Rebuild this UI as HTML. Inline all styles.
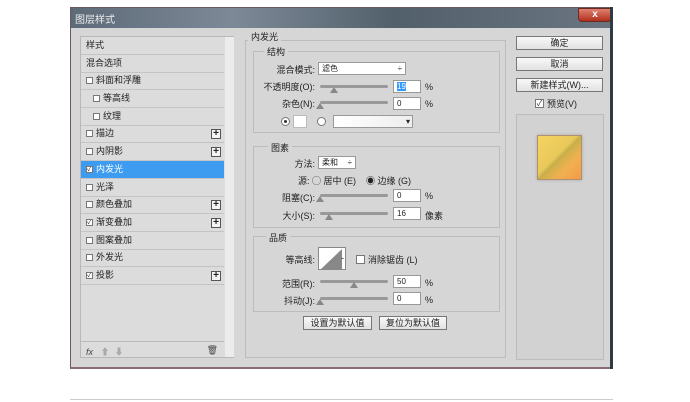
<!DOCTYPE html><html><head><meta charset="utf-8"><style>
*{box-sizing:border-box;margin:0;padding:0}
body{width:690px;height:402px;background:#fff;position:relative;overflow:hidden;font-family:"Liberation Sans","Noto Sans CJK SC",sans-serif;font-size:9px;color:#222}
.a{position:absolute}
.dlg{left:70px;top:7px;width:543px;height:362px;background:#d6d6d6;border:1px solid #6a5a60;border-bottom:2px solid #8a6a74}
.title{left:0;top:0;width:541px;height:20px;background:linear-gradient(90deg,#5d6a78,#7d8996 30%,#52606c 60%,#6a7580);color:#eee;font-size:10px;padding:3px 4px}
.close{left:507px;top:0;width:34px;height:14px;background:linear-gradient(#e08070,#b0301c);border:1px solid #6a2a20;border-radius:0 0 4px 4px;color:#fff;font-weight:bold;text-align:center;font-size:10px;line-height:12px}
.list{left:80px;top:36px;width:154px;height:322px;border:1px solid #b8b8b8;background:#dcdcdc}
.row{position:absolute;left:0;width:143px;height:18px;border-bottom:1px solid #c4c4c4;line-height:17px;padding-left:5px;font-size:9px}
.sel{background:#3d9cf0;color:#fff}
.cb{display:inline-block;width:7px;height:7px;border:1px solid #777;background:#fff;margin-right:3px;vertical-align:-1px;font-size:7px;line-height:5px;color:#333;overflow:hidden;text-align:center}
.plus{position:absolute;right:3px;top:4px;width:10px;height:10px;border:1px solid #555;background:#f4f4f4;font-size:10px;line-height:7px;text-align:center;font-weight:bold}
.sb{left:144px;top:0;width:9px;height:320px;background:#ececec}
.grp{border:1px solid #bcbcbc}
.lbl{position:absolute;background:#d6d6d6;padding:0 3px}
.inp{position:absolute;height:13px;background:#fff;border:1px solid #999;font-size:8px;padding-left:3px;line-height:11px}
.sl{position:absolute;height:3px;background:#999;border-radius:2px}
.th{position:absolute;width:0;height:0;border-left:4px solid transparent;border-right:4px solid transparent;border-bottom:6px solid #888}
.btn{position:absolute;height:14px;background:linear-gradient(#f8f8f8,#e2e2e2);border:1px solid #777;text-align:center;font-size:9px;line-height:12px}
.r{position:absolute;text-align:right}
</style></head><body>
<div class="a dlg">
<div class="a title">图层样式</div>
<div class="a close">x</div>
</div>
<div class="a list">
<div class="row" style="top:0">样式</div>
<div class="row" style="top:18px">混合选项</div>
<div class="row" style="top:35px"><span class="cb"></span>斜面和浮雕</div>
<div class="row" style="top:53px;padding-left:12px"><span class="cb"></span>等高线</div>
<div class="row" style="top:71px;padding-left:12px"><span class="cb"></span>纹理</div>
<div class="row" style="top:88px"><span class="cb"></span>描边<span class="plus">+</span></div>
<div class="row" style="top:106px"><span class="cb"></span>内阴影<span class="plus">+</span></div>
<div class="row sel" style="top:124px"><span class="cb">✓</span>内发光</div>
<div class="row" style="top:142px"><span class="cb"></span>光泽</div>
<div class="row" style="top:159px"><span class="cb"></span>颜色叠加<span class="plus">+</span></div>
<div class="row" style="top:177px"><span class="cb">✓</span>渐变叠加<span class="plus">+</span></div>
<div class="row" style="top:195px"><span class="cb"></span>图案叠加</div>
<div class="row" style="top:212px"><span class="cb"></span>外发光</div>
<div class="row" style="top:230px"><span class="cb">✓</span>投影<span class="plus">+</span></div>
<div class="a sb"></div>
<div class="a" style="left:0;top:304px;width:143px;border-top:1px solid #bbb;height:16px;font-size:9px;padding:3px 5px;color:#444"><i>fx</i> &nbsp; <span style="color:#aaa">⬆ &nbsp;⬇</span><span style="position:absolute;right:6px">🗑</span></div>
</div>

<div class="a grp" style="left:245px;top:40px;width:261px;height:318px"></div>
<div class="lbl" style="left:248px;top:30px">内发光</div>
<div class="a grp" style="left:253px;top:51px;width:247px;height:82px"></div>
<div class="lbl" style="left:264px;top:45px">结构</div>
<div class="r" style="left:250px;top:63px;width:65px">混合模式:</div>
<div class="inp" style="left:318px;top:62px;width:88px">滤色<span style="position:absolute;right:3px">÷</span></div>
<div class="r" style="left:250px;top:80px;width:65px">不透明度(O):</div>
<div class="sl" style="left:320px;top:85px;width:68px"></div><div class="th" style="left:330px;top:87px"></div>
<div class="inp" style="left:393px;top:80px;width:28px"><span style="background:#39f;color:#fff">19</span></div><div class="a" style="left:425px;top:82px">%</div>
<div class="r" style="left:250px;top:97px;width:65px">杂色(N):</div>
<div class="sl" style="left:320px;top:101px;width:68px"></div><div class="th" style="left:316px;top:103px"></div>
<div class="inp" style="left:393px;top:97px;width:28px">0</div><div class="a" style="left:425px;top:99px">%</div>
<div class="a" style="left:281px;top:117px;width:9px;height:9px;border:1px solid #777;border-radius:50%;background:#fff"><div class="a" style="left:2px;top:2px;width:3px;height:3px;background:#333;border-radius:50%"></div></div>
<div class="a" style="left:293px;top:115px;width:14px;height:13px;background:#fff;border:1px solid #bbb"></div>
<div class="a" style="left:317px;top:117px;width:9px;height:9px;border:1px solid #777;border-radius:50%;background:#fff"></div>
<div class="inp" style="left:333px;top:115px;width:80px;background:linear-gradient(90deg,#fff,#eee)"><span style="position:absolute;right:2px">▾</span></div>

<div class="a grp" style="left:253px;top:146px;width:247px;height:82px"></div>
<div class="lbl" style="left:268px;top:141px">图素</div>
<div class="r" style="left:250px;top:157px;width:65px">方法:</div>
<div class="inp" style="left:318px;top:156px;width:38px">柔和 <span style="position:absolute;right:3px">÷</span></div>
<div class="a" style="left:298px;top:174px">源: ◯ 居中 (E) &nbsp;&nbsp; ◉ 边缘 (G)</div>
<div class="r" style="left:250px;top:191px;width:65px">阻塞(C):</div>
<div class="sl" style="left:320px;top:194px;width:68px"></div><div class="th" style="left:316px;top:196px"></div>
<div class="inp" style="left:393px;top:189px;width:28px">0</div><div class="a" style="left:425px;top:191px">%</div>
<div class="r" style="left:250px;top:209px;width:65px">大小(S):</div>
<div class="sl" style="left:320px;top:212px;width:68px"></div><div class="th" style="left:325px;top:214px"></div>
<div class="inp" style="left:393px;top:207px;width:28px">16</div><div class="a" style="left:425px;top:209px">像素</div>

<div class="a grp" style="left:253px;top:236px;width:247px;height:76px"></div>
<div class="lbl" style="left:266px;top:231px">品质</div>
<div class="r" style="left:250px;top:253px;width:65px">等高线:</div>
<div class="a" style="left:318px;top:247px;width:28px;height:23px;background:#fff;border:1px solid #888"><svg width="22" height="21" style="position:absolute;left:1px;top:1px"><polygon points="0,21 22,0 22,21" fill="#888"/></svg><span style="position:absolute;right:1px;top:5px">-</span></div>
<div class="a" style="left:356px;top:253px"><span class="cb" style="width:9px;height:9px"></span>消除锯齿 (L)</div>
<div class="r" style="left:250px;top:277px;width:65px">范围(R):</div>
<div class="sl" style="left:320px;top:280px;width:68px"></div><div class="th" style="left:350px;top:282px"></div>
<div class="inp" style="left:393px;top:275px;width:28px">50</div><div class="a" style="left:425px;top:278px">%</div>
<div class="r" style="left:250px;top:294px;width:65px">抖动(J):</div>
<div class="sl" style="left:320px;top:297px;width:68px"></div><div class="th" style="left:316px;top:299px"></div>
<div class="inp" style="left:393px;top:292px;width:28px">0</div><div class="a" style="left:425px;top:295px">%</div>
<div class="btn" style="left:303px;top:316px;width:69px">设置为默认值</div>
<div class="btn" style="left:379px;top:316px;width:68px">复位为默认值</div>

<div class="btn" style="left:516px;top:36px;width:87px">确定</div>
<div class="btn" style="left:516px;top:57px;width:87px">取消</div>
<div class="btn" style="left:516px;top:78px;width:87px">新建样式(W)...</div>
<div class="a" style="left:535px;top:97px;font-size:9px"><span class="cb" style="width:9px;height:9px;font-size:8px;line-height:7px">✓</span>预览(V)</div>
<div class="a grp" style="left:516px;top:114px;width:88px;height:246px;background:#d2d2d2"></div>
<div class="a" style="left:537px;top:135px;width:45px;height:45px;background:linear-gradient(135deg,#f5d460,#e8c85a 45%,#c8b04a 50%,#f0b050 70%,#f59a48);border:1px solid #b09070;box-shadow:0 0 3px #aaa"></div>
<div class="a" style="left:610px;top:7px;width:3px;height:362px;background:#303a44"></div>
<div class="a" style="left:70px;top:399px;width:543px;height:1px;background:#ccc"></div>
</body></html>
